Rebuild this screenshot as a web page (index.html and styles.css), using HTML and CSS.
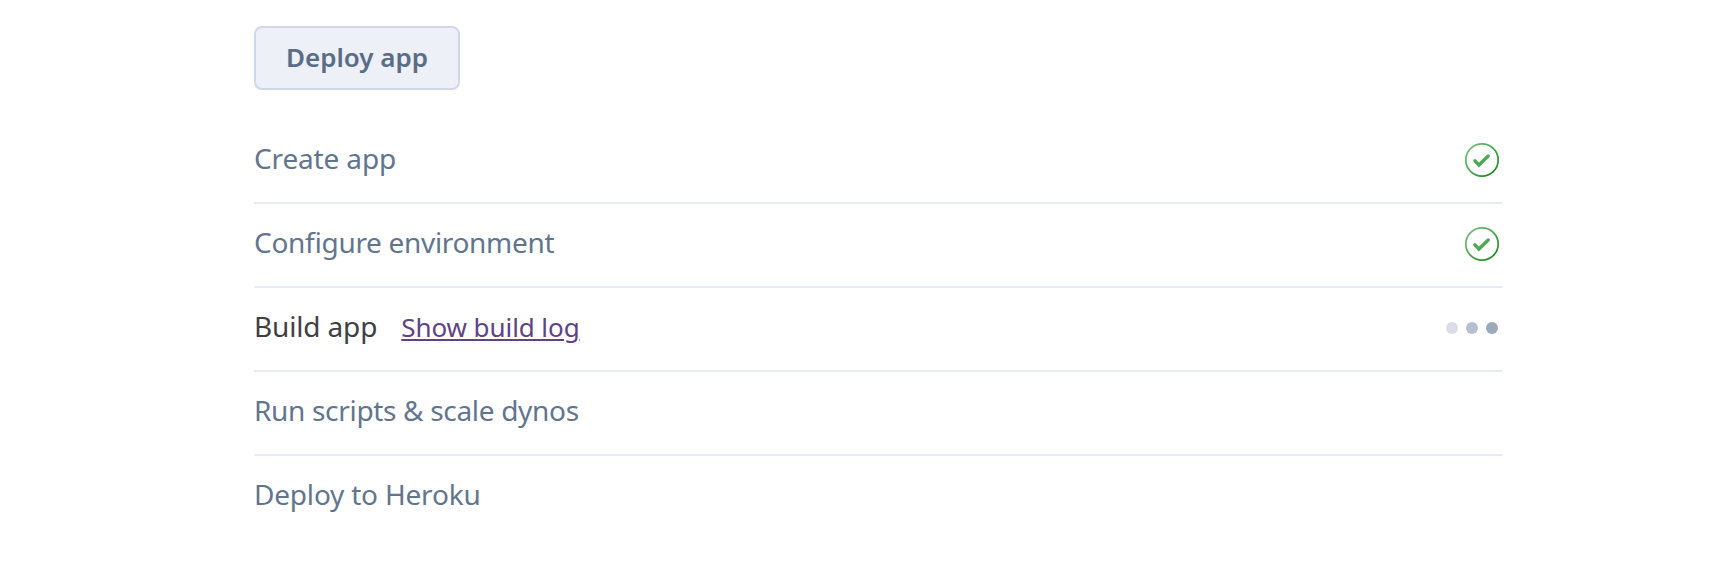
FILE: index.html
```html
<!DOCTYPE html>
<html lang="en">
<head>
<meta charset="utf-8">
<title>Deploy app</title>
<link rel="stylesheet" href="styles.css">
</head>
<body>
<svg class="defs" width="0" height="0" aria-hidden="true">
  <defs>
    <linearGradient id="ring" x1="0" y1="0" x2="1" y2="1">
      <stop offset="0" stop-color="#7cc47f"/>
      <stop offset="1" stop-color="#13851a"/>
    </linearGradient>
    <symbol id="done" viewBox="0 0 36 36">
      <circle cx="18" cy="18" r="16.2" fill="none" stroke="url(#ring)" stroke-width="1.7"/>
      <path d="M10.9 18.8l4 4.2 9.3-9" fill="none" stroke="#4fa853" stroke-width="3.4" stroke-linecap="round" stroke-linejoin="miter"/>
    </symbol>
  </defs>
</svg>
<main class="deploy">
  <button class="deploy-button" type="button">Deploy app</button>
  <ul class="steps">
    <li class="step"><span class="label t-create">Create app</span><svg class="check"><use href="#done"/></svg></li>
    <li class="step"><span class="label t-configure">Configure environment</span><svg class="check"><use href="#done"/></svg></li>
    <li class="step active"><span class="label t-build">Build app</span><a class="log" href="#">Show build log</a><span class="dots"><i class="dot light"></i><i class="dot mid"></i><i class="dot dark"></i></span></li>
    <li class="step"><span class="label t-run">Run scripts &amp; scale dynos</span></li>
    <li class="step"><span class="label t-heroku">Deploy to Heroku</span></li>
  </ul>
</main>
</body>
</html>
```
FILE: styles.css
```css
body {
  margin: 0;
  background: #fff;
  font-family: "Noto Sans", "Open Sans", sans-serif;
}
.defs { position: absolute; }
.deploy {
  width: 1248px;
  margin-left: 254px;
  padding-top: 26px;
}
.deploy-button {
  display: flex;
  align-items: center;
  justify-content: center;
  box-sizing: border-box;
  width: 206px;
  height: 64px;
  padding: 0 0 2px;
  border: 2px solid #cfd7e8;
  border-radius: 8px;
  background: #edf1f7;
  color: #596d87;
  font: 600 26px/36px "Noto Sans", "Open Sans", sans-serif;
}
.steps {
  margin: 28px 0 0;
  padding: 0;
  list-style: none;
}
.step {
  display: flex;
  align-items: center;
  box-sizing: border-box;
  height: 84px;
  padding-bottom: 2px;
  color: #62758f;
  font-size: 28px;
  line-height: 38px;
  font-feature-settings: "liga" 1;
  white-space: nowrap;
}
.step + .step { border-top: 2px solid #e6eaf5; }
.label,
.log { padding-bottom: 2px; }
.step + .step .label { padding-bottom: 4px; }
.t-create { letter-spacing: -0.15px; }
.t-configure { letter-spacing: -0.32px; }
.t-build { letter-spacing: -0.15px; }
.t-run { letter-spacing: -0.32px; }
.t-heroku { letter-spacing: -0.2px; }
.active { color: #3f3f44; }
.check {
  width: 36px;
  height: 36px;
  margin-left: auto;
  margin-right: 2px;
}
.step:first-child .check { margin-top: 2px; }
.log {
  margin-left: 24px;
  color: #5f4385;
  font-size: 26px;
  letter-spacing: -0.08px;
  text-decoration: underline;
  text-decoration-thickness: 2px;
  text-underline-offset: 2px;
}
.dots {
  display: flex;
  gap: 8px;
  margin-left: auto;
  margin-right: 4px;
}
.dot {
  width: 12px;
  height: 12px;
  border-radius: 50%;
}
.light { background: #d8dde6; }
.mid { background: #b7c0d0; }
.dark { background: #9caabd; }
```
